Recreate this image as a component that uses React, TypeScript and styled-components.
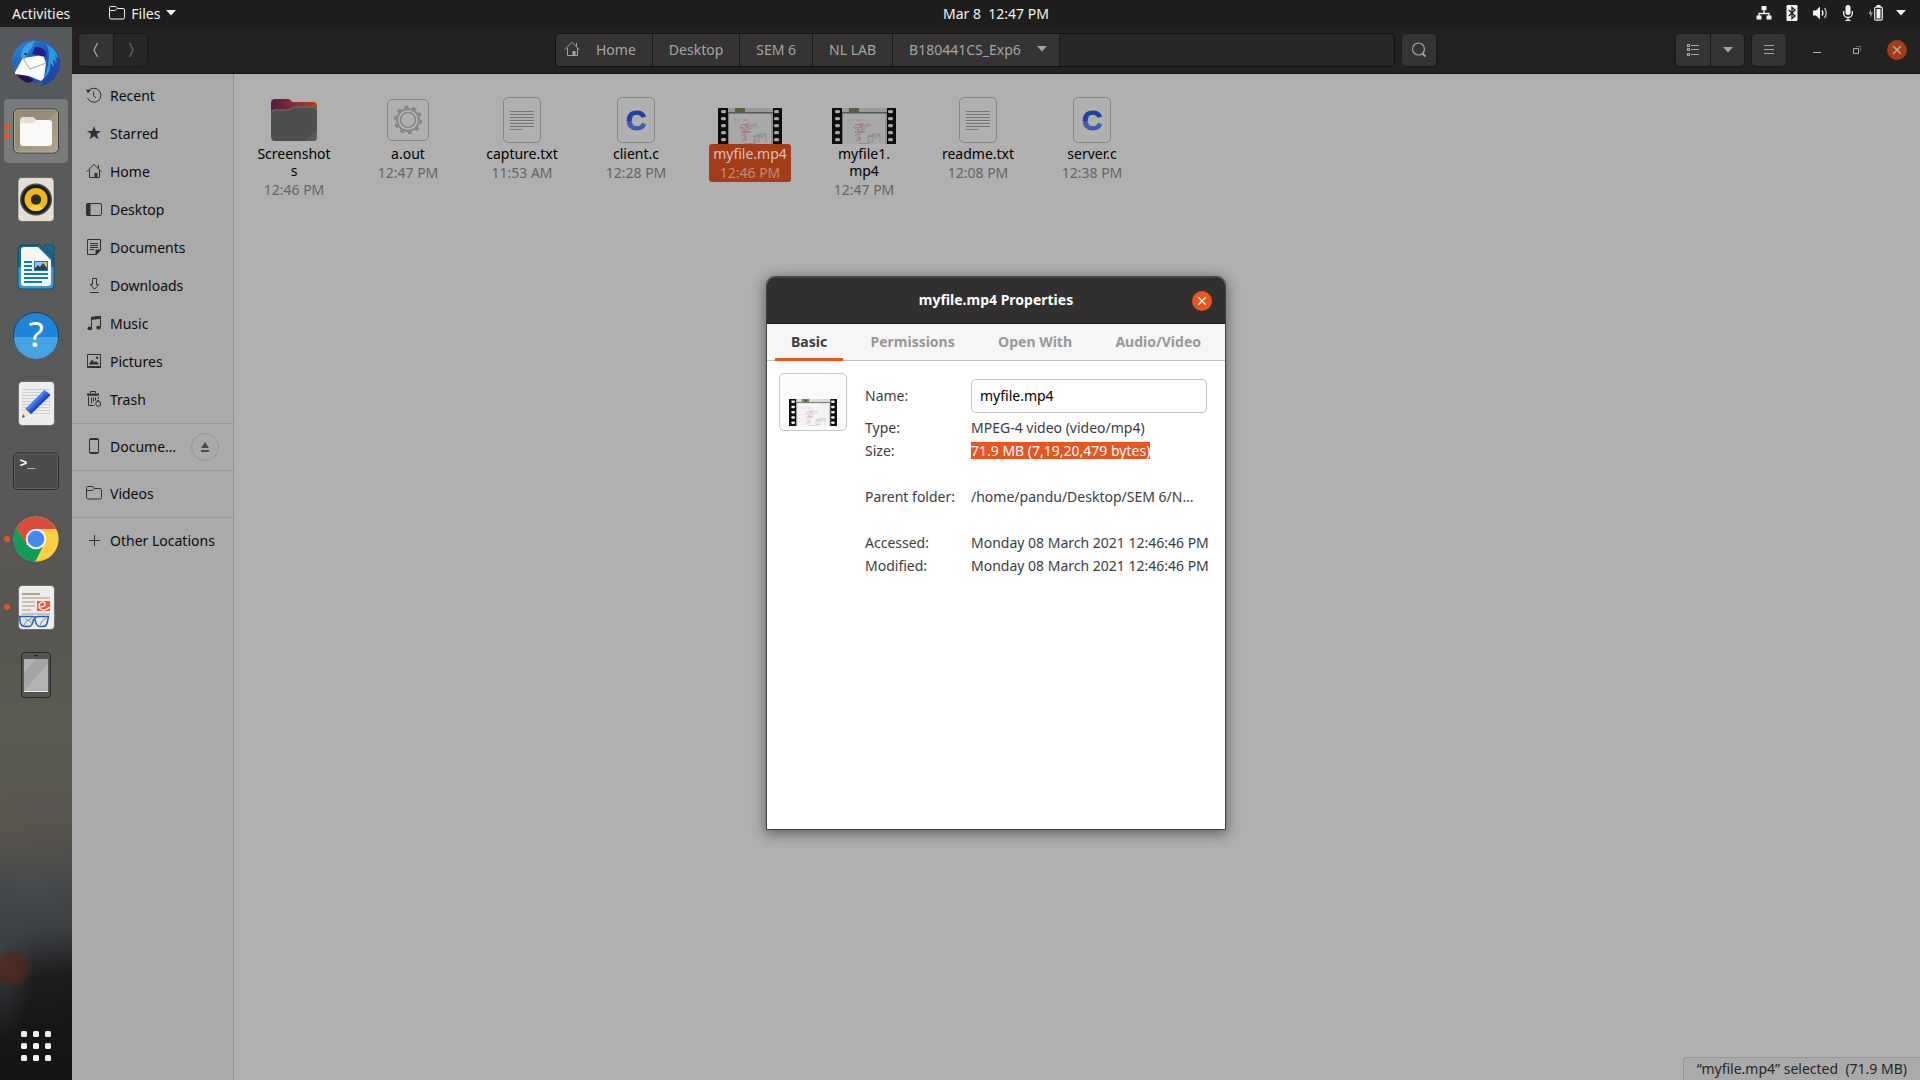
import React from "react";
import styled, { createGlobalStyle } from "styled-components";

const GlobalStyle = createGlobalStyle`
  * { box-sizing: border-box; }
  html, body, #root { height: 100%; margin: 0; }
  body {
    font: 14px/17px "Noto Sans", "Open Sans", sans-serif;
    background: #b0b0b0;
    color: #000;
    overflow: hidden;
  }
  button, input { font: inherit; color: inherit; margin: 0; }
  button { border: 0; padding: 0; background: none; }
  svg { display: block; flex: none; }
`;

/* ---------- shell ---------- */

const Screen = styled.div`
  height: 100vh;
  display: flex;
  flex-direction: column;
`;

const TopBar = styled.header`
  display: grid;
  grid-template-columns: 72px 1fr auto 1fr;
  align-items: center;
  height: 27px;
  flex: none;
  padding-bottom: 1px;
  background: #1d1d1d;
  color: #f2f2f2;
`;

const TopLeft = styled.div`
  grid-column: 1 / 3;
  display: flex;
  align-items: center;
  gap: 39px;
  padding-left: 12px;
`;

const TopButton = styled.button`
  display: flex;
  align-items: center;
  gap: 6px;
  white-space: pre;
`;

const Tray = styled.div`
  display: flex;
  justify-content: flex-end;
  align-items: center;
  gap: 12px;
  padding-right: 14px;
`;

const Desktop = styled.div`
  flex: 1;
  min-height: 0;
  display: flex;
`;

const Dock = styled.nav`
  width: 72px;
  flex: none;
  display: flex;
  flex-direction: column;
  align-items: center;
  gap: 4px;
  padding: 4px 0 2px;
  background:
    radial-gradient(circle at 12px 89.4%, rgba(88, 40, 24, 0.7) 0, rgba(80, 38, 26, 0.6) 15px, rgba(60, 30, 22, 0) 20px),
    radial-gradient(ellipse 36px 90px at 0 88%, rgba(62, 66, 72, 0.8), rgba(40, 42, 46, 0)),
    linear-gradient(174deg, #55595c 0%, #595a5b 18%, #585858 45%, #57554f 58%, #5a5b53 66%, #57544e 76.5%, #474a4d 81.5%, #3d4043 85.5%, #1c1d1e 90%, #171717 94%, #131313 100%);
`;

const DockItem = styled.button<{ $active?: boolean }>`
  position: relative;
  width: 64px;
  height: 64px;
  flex: none;
  display: grid;
  place-items: center;
  border-radius: 4px;
  background: ${(p) => (p.$active ? "rgba(255,255,255,0.2)" : "transparent")};
`;

const AppsButton = styled(DockItem)`
  margin-top: auto;
`;

const RunningDots = styled.span`
  position: absolute;
  left: 0;
  top: 0;
  height: 100%;
  display: flex;
  flex-direction: column;
  justify-content: center;
  gap: 3px;
`;

const Dot = styled.i`
  width: 6px;
  height: 6px;
  border-radius: 50%;
  background: #e95420;
`;

/* ---------- files window ---------- */

const FilesWindow = styled.section`
  position: relative;
  flex: 1;
  min-width: 0;
  display: flex;
  flex-direction: column;
`;

const HeaderBar = styled.div`
  display: grid;
  grid-template-columns: 1fr auto 1fr;
  align-items: center;
  height: 47px;
  flex: none;
  padding: 0 6px;
  background: #242122;
  border-bottom: 1px solid #121112;
  color: #a6a5a5;
`;

const HeaderGroup = styled.div<{ $end?: boolean; $gap?: number }>`
  display: flex;
  align-items: center;
  gap: ${(p) => p.$gap ?? 0}px;
  justify-content: ${(p) => (p.$end ? "flex-end" : "flex-start")};
`;

const Linked = styled.div`
  display: flex;
  border: 1px solid #1b191a;
  border-radius: 5px;
  overflow: hidden;
  > * + * { border-left: 1px solid #1b191a; }
`;

const HeaderButton = styled.button<{ $dim?: boolean }>`
  width: 34px;
  height: 32px;
  display: grid;
  place-items: center;
  background: ${(p) => (p.$dim ? "#282627" : "#353334")};
  color: ${(p) => (p.$dim ? "#686667" : "#a6a5a5")};
`;

const PathBar = styled.div`
  display: flex;
  width: min(840px, 46vw);
  border: 1px solid #121112;
  border-radius: 5px;
  background: #282627;
  overflow: hidden;
`;

const Crumb = styled.button<{ $lead?: boolean }>`
  height: 32px;
  display: flex;
  align-items: center;
  gap: 16px;
  padding: 0 16px 2px ${(p) => (p.$lead ? 8 : 16)}px;
  white-space: nowrap;
  background: #353334;
  border-right: 1px solid #1b191a;
`;

const LastCrumb = styled(Crumb)`
  padding-right: 12px;
`;

const WindowControls = styled.div`
  display: flex;
  align-items: center;
  gap: 20px;
  margin: 0 7px 0 14px;
`;

const ControlButton = styled.button<{ $close?: boolean; $bright?: boolean }>`
  width: 20px;
  height: 20px;
  display: grid;
  place-items: center;
  border-radius: 50%;
  color: ${(p) => (p.$bright ? "#fff" : "#b4b2b2")};
  background: ${(p) => (p.$bright ? "#e95420" : p.$close ? "#a53c18" : "transparent")};
`;

const WindowBody = styled.div`
  flex: 1;
  min-height: 0;
  display: flex;
`;

const Sidebar = styled.nav`
  width: 162px;
  flex: none;
  padding-top: 3px;
  background: #aaa;
  border-right: 1px solid #959595;
`;

const PlaceRow = styled.div`
  display: flex;
  align-items: center;
  height: 38px;
  padding-right: 14px;
`;

const Place = styled.a`
  flex: 1;
  min-width: 0;
  display: flex;
  align-items: center;
  gap: 8px;
  padding: 0 0 2px 14px;
  color: #0c0c0c;
  text-decoration: none;
  svg { color: #303030; }
`;

const PlaceName = styled.span`
  overflow: hidden;
  text-overflow: ellipsis;
  white-space: nowrap;
`;

const Separator = styled.hr`
  height: 1px;
  margin: 4px 0;
  border: 0;
  background: #979797;
`;

const Eject = styled.button`
  width: 28px;
  height: 28px;
  flex: none;
  margin-left: 8px;
  display: grid;
  place-items: center;
  border: 1px solid #979797;
  border-radius: 50%;
  color: #4a4a4a;
`;

const FileArea = styled.main`
  flex: 1;
  min-width: 0;
  padding: 6px 3px;
  background: #b0b0b0;
`;

const FileGrid = styled.ul`
  list-style: none;
  margin: 0;
  padding: 0;
  display: grid;
  grid-template-columns: repeat(auto-fill, 114px);
`;

const FileItem = styled.li`
  display: flex;
  flex-direction: column;
  align-items: center;
`;

const FileLabel = styled.div<{ $selected?: boolean }>`
  width: 82px;
  padding: 1px 0;
  display: flex;
  flex-direction: column;
  align-items: center;
  gap: 2px;
  text-align: center;
  border-radius: 3px;
  background: ${(p) => (p.$selected ? "#a53c18" : "transparent")};
  color: ${(p) => (p.$selected ? "#d5c2ba" : "#000")};
  time { color: ${(p) => (p.$selected ? "#c08b78" : "#646464")}; }
`;

const FileName = styled.span`
  white-space: pre-line;
`;

const StatusBar = styled.div`
  position: absolute;
  right: 0;
  bottom: 0;
  height: 23px;
  padding: 2px 13px 0;
  white-space: pre;
  color: #262626;
  background: #aaa;
  border: solid #959595;
  border-width: 1px 0 0 1px;
  border-top-left-radius: 4px;
`;

/* ---------- properties dialog ---------- */

const DialogLayer = styled.div`
  position: absolute;
  inset: 0;
  display: grid;
  place-items: center;
  padding-bottom: 1px;
`;

const Dialog = styled.div`
  width: 458px;
  min-height: 552px;
  border-radius: 8px 8px 0 0;
  overflow: hidden;
  background: #fff;
  color: #3d3d3d;
  box-shadow: 0 0 0 1px rgba(0, 0, 0, 0.5), 0 3px 14px 2px rgba(0, 0, 0, 0.45);
`;

const DialogTitle = styled.div`
  display: grid;
  grid-template-columns: 1fr auto 1fr;
  align-items: center;
  height: 47px;
  padding: 0 13px;
  background: #322f30;
  border-top: 1px solid #474445;
  border-bottom: 1px solid #1b191a;
  color: #fff;
  h1 { grid-column: 2; margin: 0; padding-bottom: 2px; font: inherit; font-weight: 700; }
  button { justify-self: end; }
`;

const Tabs = styled.div`
  display: flex;
  justify-content: space-between;
  height: 37px;
  padding: 0 8px;
  background: #f6f6f6;
  border-bottom: 1px solid #c2c2c2;
`;

const Tab = styled.button<{ $active?: boolean }>`
  height: 37px;
  padding: 1px 16px 0;
  font-weight: 700;
  color: ${(p) => (p.$active ? "#3d3d3d" : "#989898")};
  border-bottom: 3px solid ${(p) => (p.$active ? "#e95420" : "transparent")};
`;

const Panel = styled.div`
  display: flex;
  align-items: flex-start;
  gap: 18px;
  padding: 12px 18px 12px 12px;
`;

const Preview = styled.button`
  width: 68px;
  height: 58px;
  flex: none;
  display: flex;
  align-items: flex-end;
  justify-content: center;
  padding-bottom: 4px;
  border: 1px solid #c6c6c6;
  border-radius: 5px;
  background: #fcfcfc;
`;

const Fields = styled.div`
  flex: 1;
  min-width: 0;
  padding-top: 6px;
`;

const Field = styled.div<{ $spaced?: boolean }>`
  display: grid;
  grid-template-columns: 96px 1fr;
  column-gap: 10px;
  align-items: center;
  min-height: 23px;
  margin-top: ${(p) => (p.$spaced ? 23 : 0)}px;
  &:first-child { margin-bottom: 3px; }
  label { padding-bottom: 2px; }
`;

const FieldValue = styled.span`
  min-width: 0;
  white-space: nowrap;
`;

const Selected = styled.mark`
  display: inline-block;
  background: #e95420;
  color: #fff;
`;

const Entry = styled.input`
  width: 100%;
  height: 34px;
  padding: 0 8px 2px;
  border: 1px solid #c2c2c2;
  border-radius: 5px;
  background: #fff;
  color: #000;
  outline: 0;
`;

/* ---------- small symbols ---------- */

const Sym = ({ size = 16, children }: { size?: number; children: React.ReactNode }) => (
  <svg width={size} height={size} viewBox="0 0 16 16" fill="none" stroke="currentColor" strokeWidth="1" aria-hidden>
    {children}
  </svg>
);

const Caret = () => (
  <svg width="10" height="6" viewBox="0 0 10 6" fill="currentColor" aria-hidden>
    <path d="M0 0h10L5 5.4z" />
  </svg>
);

const FolderSym = () => (
  <Sym>
    <path d="M.5 12.5v-10q0-1 1-1h5q.8 0 1.200.7l.8 1.300h5.500q1.500 0 1.500 1.500v7.500q0 1.500-1.500 1.500h-12q-1.500 0-1.500-1.500z M.5 5.500h5.200q.8 0 1.300-.8l1-1.200" />
  </Sym>
);

const HomeSym = () => (
  <Sym>
    <path d="M.7 8.700 8 1.300l7.300 7.400M3.500 7v7.500h10M13.500 7v7.500M12.500 2v3.500" />
    <path d="M8.500 14.500V10h3v4.500z" fill="currentColor" stroke="none" />
  </Sym>
);

const CrossSym = () => (
  <Sym size={12}>
    <path d="M3 3l10 10M13 3L3 13" strokeWidth="1.800" />
  </Sym>
);

const placeIcons: Record<string, React.ReactNode> = {
  Recent: (
    <Sym>
      <path d="M2.200 4.200A7 7 0 1 1 1.500 11M7.500 4.500v4l2.500 2.500" />
      <path d="M0 2.500 4.800 3 2 6.500z" fill="currentColor" stroke="none" />
    </Sym>
  ),
  Starred: (
    <Sym>
      <path d="M8 1l1.900 5h5.100l-4.100 3.100 1.500 5.100L8 11.200l-4.400 3 1.500-5.100L1 6h5.100z" fill="currentColor" stroke="none" />
    </Sym>
  ),
  Home: <HomeSym />,
  Desktop: (
    <Sym>
      <rect x=".5" y="2.500" width="15" height="12" rx="1.500" />
      <path d="M1 2.500h3v12H1z" fill="currentColor" />
    </Sym>
  ),
  Documents: (
    <Sym>
      <path d="M1.500.5h13v10l-4 5h-9zM4 4.500h8M4 6.500h8M4 8.500h8M4 10.500h4" />
      <path d="M10 15.500V11h4.500z" fill="currentColor" />
    </Sym>
  ),
  Downloads: (
    <Sym>
      <path d="M6.500 1.500h4v6h2.200l-4.200 4.700-4.200-4.700h2.200zM4 15.500h9" />
    </Sym>
  ),
  Music: (
    <Sym>
      <path d="M5.500 13V2.500l9-1V12" />
      <path d="M5 2l10-1.200v3L5 5z" fill="currentColor" stroke="none" />
      <ellipse cx="3.800" cy="13.300" rx="2.300" ry="1.900" fill="currentColor" stroke="none" />
      <ellipse cx="12.500" cy="12.600" rx="2.300" ry="1.900" fill="currentColor" stroke="none" />
    </Sym>
  ),
  Pictures: (
    <Sym>
      <path d="M1.500 1.500h13v13h-13z" />
      <path d="M3 11l3-4.500 2.500 3L10 8l3 3v.500H3zM1 13h14v2H1z" fill="currentColor" stroke="none" />
      <circle cx="11" cy="4.800" r="1.300" fill="currentColor" stroke="none" />
    </Sym>
  ),
  Trash: (
    <Sym>
      <path d="M1 4h12M4.500 2V.5h5V2M2.500 5.500v9h5.500M5.500 6.500v6M7.500 6.500v4M9.500 6.500v3M12.500 6v2" />
      <path d="M1 2.500h12v2H1z" fill="currentColor" stroke="none" />
      <circle cx="12.200" cy="12.800" r="2.500" />
      <path d="M11 10.500l1-1.500 1.500 1.500" />
    </Sym>
  ),
  Device: (
    <Sym>
      <rect x="3.500" y=".5" width="9" height="15" rx="1.500" />
      <path d="M4 1.500h8M4 14.500h8" />
    </Sym>
  ),
  Videos: <FolderSym />,
  Other: (
    <Sym>
      <path d="M3 8.500h11M8.500 3v11" />
    </Sym>
  ),
};

/* ---------- file and application artwork ---------- */

const Film = ({ width, dim }: { width: number; dim?: boolean }) => (
  <svg width={width} height={(width * 9) / 16} viewBox="0 0 64 36" aria-hidden>
    <rect width="64" height="36" fill={dim ? "#0c0c0c" : "#101010"} />
    <rect x="10" width="45" height="36" fill={dim ? "#a9a9a9" : "#f4f4f4"} />
    <rect x="10" width="45" height="4" fill={dim ? "#999" : "#dcdcdc"} />
    <rect x="10" y="4" width="45" height="1.500" fill={dim ? "#555" : "#7c7c7c"} />
    <rect x="17" width="10" height="4.500" fill={dim ? "#4f6545" : "#6d8c5f"} />
    <rect x="21" y="1" width="3" height="2.500" fill="#8a4238" />
    <path d="M10.500 5v31M54 5v31" stroke={dim ? "#777" : "#bbb"} strokeWidth="1" />
    <g fill="none" stroke={dim ? "#91545e" : "#e08c9b"} strokeWidth=".7" opacity=".8" strokeDasharray="2.500 .8">
      <path d="M23 17l6-1 3 1 6-1M21 19l5 1 5-2 3 1 5-2M22 20l7 2 4-2M27 22l-4 2 8-1M25 25l8-1M23 28l3-2 3 1M24 31l4-2v3l-4 1M31 14l-3 5 5 2M26 27l2 5" />
    </g>
    <g fill="none" stroke={dim ? "#6c6c6c" : "#a5a5a5"} strokeWidth=".5">
      <path d="M16 12h2M20 12h2M25 12h4M25 17h5M27 24h5M36 34v-6h5v6zM41 28v-2h7v8M36 28h12M38 30v2M44 28v3M26 35.500h12" />
    </g>
    <path d="M43 7.500h1M46 7.500h1M50 7.500h1" stroke="#a59a55" strokeWidth=".7" />
    {[3.500, 10.500, 17.500, 24.500, 31.500].map((y) => (
      <g key={y} fill={dim ? "#a9a9a9" : "#eee"}>
        <rect x="3" y={y - 1.500} width="5" height="3.200" rx="1.500" />
        <rect x="56" y={y - 1.500} width="5" height="3.200" rx="1.500" />
      </g>
    ))}
  </svg>
);

const Art = ({ children, size = 64 }: { children: React.ReactNode; size?: number }) => (
  <svg width={size} height={size} viewBox={`0 0 ${size} ${size}`} aria-hidden>
    {children}
  </svg>
);

const paper = { fill: "#b1b1b1", stroke: "#868686", strokeWidth: 1 };

const fileArt: Record<string, React.ReactNode> = {
  folder: (
    <Art>
      <defs>
        <linearGradient id="folderBack">
          <stop offset="0" stopColor="#551c40" />
          <stop offset=".45" stopColor="#7e2c38" />
          <stop offset="1" stopColor="#b04418" />
        </linearGradient>
      </defs>
      <path d="M9 23q0-4 4-4h13q2 0 3 1.500l1 1.500h21q4 0 4 4v12H9z" fill="url(#folderBack)" />
      <path d="M9 33q0-3.500 4-3.500h13q2 0 3-1l1.500-1q1-1 3-1H51q4 0 4 3.500v27q0 4-4 4H13q-4 0-4-4z" fill="#4e4e4e" />
      <path d="M9.500 33q0-3 3.500-3h13q2 0 3-1l1.500-1q1-1 3-1H51q3.500 0 3.500 3" fill="none" stroke="#777" strokeWidth=".8" />
      <path d="M55 50L43 61h8q4 0 4-4z" fill="#595959" />
    </Art>
  ),
  binary: (
    <Art>
      <rect x="11.500" y="19.500" width="41" height="41" rx="4.500" {...paper} />
      <circle cx="32" cy="40" r="11" fill="none" stroke="#858585" strokeWidth="1.800" />
      <circle cx="32" cy="40" r="13" fill="none" stroke="#858585" strokeWidth="2.500" strokeDasharray="4 4.170" />
      <circle cx="32" cy="40" r="7.500" fill="none" stroke="#858585" strokeWidth="1.500" />
    </Art>
  ),
  text: (
    <Art>
      <rect x="13.500" y="17.500" width="37" height="45" rx="4.500" {...paper} />
      <path d="M20 31.500h24M20 34.500h24M20 37.500h24M20 40.500h24M20 43.500h24M20 46.500h24M20 49.500h12" stroke="#757575" />
    </Art>
  ),
  source: (
    <Art>
      <defs>
        <linearGradient id="cInk" x1="0" y1="0" x2="0" y2="1">
          <stop offset=".52" stopColor="#1f429c" />
          <stop offset=".52" stopColor="#3d5cae" />
        </linearGradient>
      </defs>
      <rect x="13.500" y="17.500" width="37" height="45" rx="4.500" {...paper} />
      <text x="32" y="50" textAnchor="middle" fontFamily="Liberation Sans, sans-serif" fontWeight="700" fontSize="28" fill="url(#cInk)" stroke="url(#cInk)">C</text>
    </Art>
  ),
};

const FilmFrame = styled.div`
  height: 64px;
  display: flex;
  align-items: flex-end;
`;

const Sheet = () => <rect x="6.500" y="2.500" width="36" height="44" rx="4" fill="#ededed" stroke="#3b3b3b" strokeOpacity=".5" />;

const Thunderbird = () => (
  <Art size={48}>
    <defs>
      <linearGradient id="tbBody" x1="0" y1="0" x2="1" y2="1">
        <stop offset="0" stopColor="#2c8de0" />
        <stop offset=".5" stopColor="#1c57bd" />
        <stop offset="1" stopColor="#1a3f99" />
      </linearGradient>
    </defs>
    <path d="M0 22C1 10 9 3 18 2q3-2 6-1l-2 1c13-2 25 8 26 20 1 14-9 24-20 25l3-4C18 46 4 40 2 30z" fill="url(#tbBody)" />
    <path d="M4 34q4 8 13 10l5-3-16-9z" fill="#2a1055" />
    <path d="M3 33c3-5 5-9 8-14l20-3 3 8-2 15-3 3-12-5-14-2z" fill="#fbfbfb" />
    <path d="M10 18l8 12 16-6" fill="none" stroke="#999" strokeWidth=".9" />
    <path d="M9 18c0-9 6-16 15-16-3 2-4 4-3 5-4 5-6 7-8 13z" fill="#3aa0e4" />
    <path d="M23 8c7 0 12 3 11 9-3 2-8-2-14-2z" fill="#1c1f87" />
    <path d="M34 5c7 3 11 8 12 14l-3-2 2 7-4-4 1 8-4-4c1 7-2 12-6 15l4-13c1-8 2-14-2-21z" fill="#2998dc" />
    <path d="M3 17l-2 11 5-8z" fill="#1f63c7" />
    <circle cx="13.500" cy="15" r="1.100" fill="#101030" />
  </Art>
);

const dockArt: Record<string, React.ReactNode> = {
  Thunderbird: <Thunderbird />,
  Files: (
    <Art size={48}>
      <defs>
        <linearGradient id="filesBg" x1="0" y1="0" x2="1" y2="1">
          <stop offset=".5" stopColor="#958c75" />
          <stop offset=".5" stopColor="#9f9781" />
          <stop offset="1" stopColor="#aba48e" />
        </linearGradient>
      </defs>
      <rect x="1.500" y="2" width="45" height="44" rx="5" fill="url(#filesBg)" stroke="#3a382f" />
      <rect x="2.500" y="3" width="43" height="42" rx="4" fill="none" stroke="#b5ae9b" strokeWidth=".8" />
      <path d="M8 14q0-4 3-4h9q2 0 3 1.500l1 1.500h13v10H8z" fill="#e4dfd3" />
      <path d="M8 18q0-2 3-2h9q2 0 3-1.500t3-1.500h11q3 0 3 3v20q0 3-3 3H11q-3 0-3-3z" fill="#faf9f8" />
    </Art>
  ),
  Rhythmbox: (
    <Art size={48}>
      <rect x="6" y="2.500" width="36" height="44" rx="4" fill="#e2ded2" stroke="#3b3b3b" strokeOpacity=".5" />
      <circle cx="24" cy="24.500" r="16" fill="#4a4a50" />
      <circle cx="24" cy="24.500" r="14.500" fill="#1d1c22" />
      <circle cx="24" cy="24.500" r="11.500" fill="#efb914" />
      <path d="M17 33.500a11.500 11.500 0 0 0 14 0l-7-7z" fill="#f6d43f" />
      <circle cx="24" cy="24.500" r="5.200" fill="#2b2b2b" />
    </Art>
  ),
  Writer: (
    <Art size={48}>
      <path d="M10 2h18l14 13v27q0 4-4 4H10q-4 0-4-4V6q0-4 4-4z" fill="#106b9b" stroke="#154a66" />
      <path d="M6.500 24h35v17q0 4.500-4 4.500h-27q-4 0-4-4.500z" fill="#3b9bd0" />
      <path d="M32 2h9q1 0 1 1v10z" fill="#106b9b" stroke="#0d5277" />
      <path d="M12 4h14l13 13v23q0 3-3 3H12q-3 0-3-3V7q0-3 3-3z" fill="#f6f6f6" />
      <path d="M12 19h8M12 23h8M12 27h8M12 31h24M12 35h24M12 39h18" stroke="#117cb5" strokeWidth="1.800" />
      <rect x="22" y="18" width="14" height="10" fill="#1679ae" />
      <rect x="23" y="19" width="12" height="8" fill="#8cc9ea" />
      <path d="M23 27v-2l3-3 2 2 3-4 4 5v2z" fill="#3c3c3c" />
      <path d="M32 19h3v3z" fill="#fab700" />
    </Art>
  ),
  Help: (
    <Art size={48}>
      <circle cx="24" cy="24" r="22.500" fill="#1f85da" stroke="#1b425f" />
      <path d="M2 26h44a22 22 0 0 1-44 0z" fill="#45a4e6" />
      <text x="24" y="36" textAnchor="middle" fontFamily="Noto Sans, sans-serif" fontSize="35" fill="#fff">?</text>
    </Art>
  ),
  Editor: (
    <Art size={48}>
      <Sheet />
      <path d="M10 10.500h28M10 13.500h28M10 16.500h28M10 19.500h28M10 22.500h28M10 25.500h28M10 28.500h28M10 31.500h28M10 34.500h28" stroke="#cecece" />
      <path d="M10 39l3-9 6 5z" fill="#fcdfc4" />
      <path d="M10 39l1-3.500 2 2z" fill="#444" />
      <path d="M13.500 30L32.500 11l6 5L19 35z" fill="#2b5fe0" />
      <path d="M13.500 30L32.500 11l2 1.700L15.500 32z" fill="#4b7cf0" />
      <path d="M17.500 33.500L37 14.700l1.500 1.300L19 35z" fill="#1c45b5" />
    </Art>
  ),
  Terminal: (
    <Art size={48}>
      <rect x="1.500" y="6" width="45" height="36.500" rx="4.500" fill="#4b4b4b" stroke="#272727" />
      <rect x="2.500" y="7" width="43" height="34.500" rx="3.500" fill="none" stroke="#686868" strokeWidth=".8" />
      <text x="7.500" y="20" fontFamily="Liberation Mono, monospace" fontWeight="700" fontSize="13" fill="#fff">&gt;_</text>
    </Art>
  ),
  Chrome: (
    <Art size={48}>
      <circle cx="24" cy="24" r="22.500" fill="#ffce44" />
      <path d="M24 24L13.500 29.500 4.500 12.700A22.500 22.500 0 0 1 43.800 14H24z" fill="#dd4b3e" />
      <path d="M4.500 12.700L14.500 30 32 29 23.500 46.500A22.500 22.500 0 0 1 4.500 12.700z" fill="#119d58" />
      <path d="M24 14h20a22.500 22.500 0 0 1-20.500 32.500L33 29z" fill="#ffce44" />
      <circle cx="24" cy="24" r="10.300" fill="#f2f2f2" />
      <circle cx="24" cy="24" r="8.300" fill="#4587f4" />
    </Art>
  ),
  Reader: (
    <Art size={48}>
      <Sheet />
      <path d="M10 11h18" stroke="#aca491" strokeWidth="2" />
      <path d="M10 15h28M10 19h13M10 23h13M10 27h9M10 31h28" stroke="#c8c3b2" strokeWidth="2" />
      <rect x="25" y="18" width="13" height="10" fill="#f7573f" />
      <path d="M28 24q5 0 5-3t-3-2-3 4 3 4 8-3" fill="none" stroke="#fff" strokeWidth="1.200" />
      <path d="M7.500 33.500h13q2 0 2.500 1.500.5-1.500 2.500-1.500h11l-1.500 7q-1 3-4 3h-3q-4 0-5-7h-1.500q-1 7-5 7h-3q-4 0-5-3z" fill="#dfe3e6" fillOpacity=".7" stroke="#1d63b0" strokeWidth="1.500" />
      <path d="M12 42q2-5 8-7M28 42q2-5 6-7M13 36q6 1 8 6" fill="none" stroke="#8a8a8a" />
    </Art>
  ),
  Phone: (
    <Art size={48}>
      <rect x="9.500" y="1.500" width="29" height="45" rx="3" fill="#555" stroke="#272727" />
      <rect x="12" y="8" width="24" height="33" fill="#b3b3b3" />
      <path d="M12 22L24 8h12v4L12 40z" fill="#a5a5a5" />
      <path d="M12 40.500h24" stroke="#ececec" />
      <path d="M22 4.500h4" stroke="#222" strokeWidth="1.200" />
    </Art>
  ),
};

const dockApps: { name: string; windows: number; active?: boolean }[] = [
  { name: "Thunderbird", windows: 0 },
  { name: "Files", windows: 2, active: true },
  { name: "Rhythmbox", windows: 0 },
  { name: "Writer", windows: 0 },
  { name: "Help", windows: 0 },
  { name: "Editor", windows: 0 },
  { name: "Terminal", windows: 0 },
  { name: "Chrome", windows: 1 },
  { name: "Reader", windows: 1 },
  { name: "Phone", windows: 0 },
];

const places = ["Recent", "Starred", "Home", "Desktop", "Documents", "Downloads", "Music", "Pictures", "Trash"];

const files: { name: string; time: string; kind: string; selected?: boolean }[] = [
  { name: "Screenshot\ns", time: "12:46 PM", kind: "folder" },
  { name: "a.out", time: "12:47 PM", kind: "binary" },
  { name: "capture.txt", time: "11:53 AM", kind: "text" },
  { name: "client.c", time: "12:28 PM", kind: "source" },
  { name: "myfile.mp4", time: "12:46 PM", kind: "video", selected: true },
  { name: "myfile1.\nmp4", time: "12:47 PM", kind: "video" },
  { name: "readme.txt", time: "12:08 PM", kind: "text" },
  { name: "server.c", time: "12:38 PM", kind: "source" },
];

const TrayIcons = () => (
  <>
    <Sym>
      <path d="M8 5v4M3 11V8.500h10V11" strokeWidth="1.300" />
      <path d="M5.500 1h5v4.200h-5zM.5 10.500h5v4h-5zM10.500 10.500h5v4h-5z" fill="currentColor" stroke="none" />
    </Sym>
    <Sym>
      <rect x="2.500" width="11" height="16" rx="1" fill="currentColor" stroke="none" />
      <path d="M4.800 5l6.200 6-3 2.500v-11L11 5l-6.200 6" stroke="#1d1d1d" strokeWidth="1.300" />
    </Sym>
    <Sym>
      <path d="M1 5.500h3l4-4v13l-4-4H1z" fill="currentColor" stroke="none" />
      <path d="M10 5.500q1.700 2.500 0 5" strokeWidth="1.400" />
      <path d="M12.500 3q3.500 5 0 10" strokeWidth="1.400" opacity=".7" />
    </Sym>
    <Sym>
      <rect x="5.500" y="0" width="5" height="10" rx="2.500" fill="currentColor" stroke="none" />
      <path d="M3.700 6v2.500a4.300 4 0 0 0 8.600 0V6M8 12.500V15M5.500 15.300h5" strokeWidth="1.300" />
    </Sym>
    <Sym>
      <path d="M3 4L.5 9h2L2 13l3-5.500H3z" fill="currentColor" stroke="none" opacity=".6" />
      <rect x="6.700" y="2.200" width="7.600" height="13" rx="1.500" strokeWidth="1.200" />
      <path d="M8.500 4h4v9.500h-4zM8.500 0h4v2h-4z" fill="currentColor" stroke="none" />
    </Sym>
    <Caret />
  </>
);

const Properties = () => (
  <DialogLayer>
    <Dialog role="dialog" aria-labelledby="props-title">
      <DialogTitle>
        <h1 id="props-title">myfile.mp4 Properties</h1>
        <ControlButton $bright aria-label="Close dialog"><CrossSym /></ControlButton>
      </DialogTitle>
      <Tabs role="tablist">
        <Tab role="tab" aria-selected $active>Basic</Tab>
        <Tab role="tab">Permissions</Tab>
        <Tab role="tab">Open With</Tab>
        <Tab role="tab">Audio/Video</Tab>
      </Tabs>
      <Panel>
        <Preview aria-label="Choose custom icon"><Film width={48} /></Preview>
        <Fields>
          <Field>
            <label htmlFor="file-name">Name:</label>
            <Entry id="file-name" type="text" defaultValue="myfile.mp4" />
          </Field>
          <Field>
            <span>Type:</span>
            <FieldValue>MPEG-4 video (video/mp4)</FieldValue>
          </Field>
          <Field>
            <span>Size:</span>
            <FieldValue><Selected>71.9 MB (7,19,20,479 bytes)</Selected></FieldValue>
          </Field>
          <Field $spaced>
            <span>Parent folder:</span>
            <FieldValue>/home/pandu/Desktop/SEM 6/N…</FieldValue>
          </Field>
          <Field $spaced>
            <span>Accessed:</span>
            <FieldValue>Monday 08 March 2021 12:46:46 PM</FieldValue>
          </Field>
          <Field>
            <span>Modified:</span>
            <FieldValue>Monday 08 March 2021 12:46:46 PM</FieldValue>
          </Field>
        </Fields>
      </Panel>
    </Dialog>
  </DialogLayer>
);

export default function App() {
  return (
    <Screen>
      <GlobalStyle />
      <TopBar>
        <TopLeft>
          <TopButton>Activities</TopButton>
          <TopButton><FolderSym />Files<Caret /></TopButton>
        </TopLeft>
        <TopButton>{"Mar 8  12:47 PM"}</TopButton>
        <Tray><TrayIcons /></Tray>
      </TopBar>
      <Desktop>
        <Dock aria-label="Dock">
          {dockApps.map((app) => (
            <DockItem key={app.name} $active={app.active} aria-label={app.name}>
              {dockArt[app.name]}
              <RunningDots>
                {Array.from({ length: app.windows }, (_, i) => <Dot key={i} />)}
              </RunningDots>
            </DockItem>
          ))}
          <AppsButton aria-label="Show applications">
            <svg width="30" height="30" viewBox="0 0 30 30" fill="#f2f2f2">
              {[0, 12, 24].map((y) => [0, 12, 24].map((x) => <rect key={`${x}-${y}`} x={x} y={y} width="6" height="6" rx="1.500" />))}
            </svg>
          </AppsButton>
        </Dock>
        <FilesWindow>
          <HeaderBar>
            <HeaderGroup>
              <Linked>
                <HeaderButton aria-label="Back"><Sym><path d="M9.500 1L6 8l3.500 7" strokeWidth="1.300" /></Sym></HeaderButton>
                <HeaderButton $dim aria-label="Forward"><Sym><path d="M6.500 1L10 8l-3.500 7" strokeWidth="1.300" /></Sym></HeaderButton>
              </Linked>
            </HeaderGroup>
            <HeaderGroup $gap={6}>
              <PathBar>
                <Crumb $lead><HomeSym />Home</Crumb>
                <Crumb>Desktop</Crumb>
                <Crumb>SEM 6</Crumb>
                <Crumb>NL LAB</Crumb>
                <LastCrumb>B180441CS_Exp6<Caret /></LastCrumb>
              </PathBar>
              <Linked>
                <HeaderButton aria-label="Search">
                  <Sym><circle cx="7.500" cy="7" r="6" strokeWidth="1.200" /><path d="M11.500 11.500l3 3" strokeWidth="1.800" /></Sym>
                </HeaderButton>
              </Linked>
            </HeaderGroup>
            <HeaderGroup $end $gap={6}>
              <Linked>
                <HeaderButton aria-label="List view">
                  <Sym><path d="M2.500 2.500h2v2h-2zM2.500 6.500h2v2h-2zM2.500 11.500h2v2h-2zM6 3.500h8M6 7.500h8M6 12.500h8" strokeWidth="1.100" /></Sym>
                </HeaderButton>
                <HeaderButton aria-label="View options"><Caret /></HeaderButton>
              </Linked>
              <Linked>
                <HeaderButton aria-label="Menu"><Sym><path d="M3 3.500h10M3 7.500h10M3 11.500h10" /></Sym></HeaderButton>
              </Linked>
              <WindowControls>
                <ControlButton aria-label="Minimize"><Sym><path d="M4 10.500h8" /></Sym></ControlButton>
                <ControlButton aria-label="Restore"><Sym><path d="M4.500 6.500h5v5h-5z" /><path d="M7 4.500h4.500V9" opacity=".5" /></Sym></ControlButton>
                <ControlButton $close aria-label="Close"><CrossSym /></ControlButton>
              </WindowControls>
            </HeaderGroup>
          </HeaderBar>
          <WindowBody>
            <Sidebar aria-label="Places">
              {places.map((p) => (
                <PlaceRow key={p}>
                  <Place href="#">{placeIcons[p]}<PlaceName>{p}</PlaceName></Place>
                </PlaceRow>
              ))}
              <Separator />
              <PlaceRow>
                <Place href="#">{placeIcons.Device}<PlaceName>Docume…</PlaceName></Place>
                <Eject aria-label="Eject">
                  <svg width="8" height="10" viewBox="0 0 8 10" fill="currentColor"><path d="M4 0l4 6H0zM0 8h8v2H0z" /></svg>
                </Eject>
              </PlaceRow>
              <Separator />
              <PlaceRow>
                <Place href="#">{placeIcons.Videos}<PlaceName>Videos</PlaceName></Place>
              </PlaceRow>
              <Separator />
              <PlaceRow>
                <Place href="#">{placeIcons.Other}<PlaceName>Other Locations</PlaceName></Place>
              </PlaceRow>
            </Sidebar>
            <FileArea>
              <FileGrid>
                {files.map((f) => (
                  <FileItem key={f.name}>
                    {f.kind === "video" ? <FilmFrame><Film width={64} dim /></FilmFrame> : fileArt[f.kind]}
                    <FileLabel $selected={f.selected}>
                      <FileName>{f.name}</FileName>
                      <time>{f.time}</time>
                    </FileLabel>
                  </FileItem>
                ))}
              </FileGrid>
            </FileArea>
          </WindowBody>
          <StatusBar>{"“myfile.mp4” selected  (71.9 MB)"}</StatusBar>
          <Properties />
        </FilesWindow>
      </Desktop>
    </Screen>
  );
}
